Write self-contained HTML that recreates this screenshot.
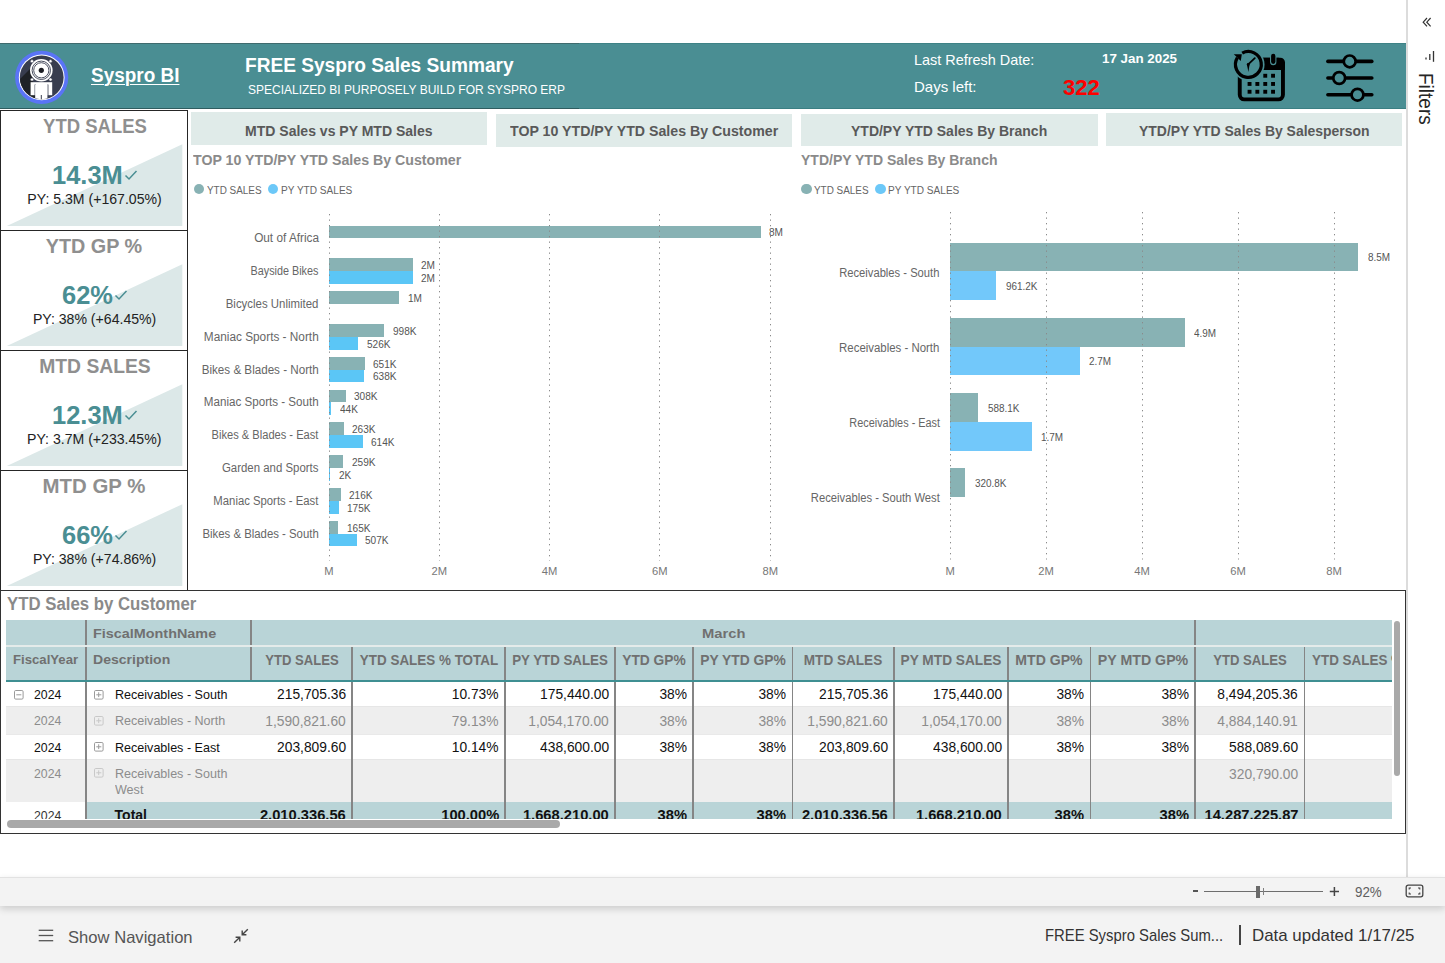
<!DOCTYPE html>
<html><head><meta charset="utf-8"><style>
*{box-sizing:border-box;margin:0;padding:0}
html,body{width:1445px;height:963px;overflow:hidden;background:#fff;font-family:"Liberation Sans",sans-serif;position:relative}
.a{position:absolute;white-space:nowrap}
.hdr{left:0;top:43px;width:1406px;height:66px;background:#4a8e93}
.wt{color:#fff}
</style></head><body>
<!-- header -->
<div class="a hdr"></div>
<svg class="a" style="left:10px;top:45px" width="64" height="64" viewBox="0 0 64 64">
  <defs><clipPath id="lc"><circle cx="31.7" cy="32.4" r="21.8"/></clipPath></defs>
  <circle cx="31.7" cy="32.4" r="26.6" fill="#5a74f6"/>
  <circle cx="31.7" cy="32.4" r="22.9" fill="#fff"/>
  <circle cx="31.7" cy="32.4" r="21.9" fill="#383d4f"/>
  <g clip-path="url(#lc)"><path d="M4 40 L21 23 L26 58 L4 58 Z" fill="#1f2226"/></g>
  <circle cx="31.3" cy="25.3" r="11.3" fill="#fff"/>
  <circle cx="31.3" cy="25.3" r="9.2" fill="none" stroke="#383d4f" stroke-width="0.9"/>
  <circle cx="31.3" cy="25.3" r="7.6" fill="none" stroke="#383d4f" stroke-width="0.9"/>
  <circle cx="31.3" cy="25.3" r="2.6" fill="#1d1f24"/>
  <g fill="#fff" stroke="#383d4f" stroke-width="0.5"><circle cx="22" cy="16.2" r="1.6"/><circle cx="40.5" cy="16.2" r="1.6"/>
  <circle cx="22" cy="34.5" r="1.6"/><circle cx="40.5" cy="34.5" r="1.6"/></g>
  <g clip-path="url(#lc)">
  <rect x="20.6" y="37.2" width="21.6" height="13" fill="#fff"/>
  <rect x="24.6" y="39.5" width="1" height="12" fill="#383d4f"/>
  <rect x="37.4" y="39.5" width="1" height="12" fill="#383d4f"/>
  <rect x="25.2" y="40" width="12.2" height="16" fill="#fff"/>
  <rect x="30.8" y="50" width="1" height="8" fill="#383d4f"/>
  </g>
</svg>
<div class="a wt" style="left:91px;top:64px;font-size:19.5px;font-weight:700;text-decoration:underline;text-underline-offset:1.5px;text-decoration-thickness:1.2px;transform:scaleX(0.972);transform-origin:0 0">Syspro BI</div>
<div class="a wt" style="left:245px;top:54px;font-size:20px;font-weight:700;transform:scaleX(0.955);transform-origin:0 0">FREE Syspro Sales Summary</div>
<div class="a wt" style="left:248px;top:82px;font-size:13.5px;transform:scaleX(0.889);transform-origin:0 0">SPECIALIZED BI PURPOSELY BUILD FOR SYSPRO ERP</div>
<div class="a wt" style="left:914px;top:51.5px;font-size:14.8px;transform:scaleX(0.975);transform-origin:0 0">Last Refresh Date:</div>
<div class="a wt" style="left:914px;top:78px;font-size:15px">Days left:</div>
<div class="a wt" style="left:1102px;top:50.8px;font-size:13.5px;font-weight:700;transform:scaleX(0.99);transform-origin:0 0">17 Jan 2025</div>
<div class="a" style="left:1063px;top:75.2px;font-size:22px;font-weight:700;color:#fe0000;transform:scaleX(1.0);transform-origin:0 0">322</div>
<svg class="a" style="left:1225px;top:45px" width="70" height="63" viewBox="0 0 70 63">
  <rect x="14.75" y="14.75" width="43.2" height="39.6" rx="4.5" fill="none" stroke="#000" stroke-width="3.9"/>
  <rect x="12.8" y="12.8" width="47.1" height="12.1" rx="4.5" fill="#000"/>
  <rect x="12.8" y="18" width="47.1" height="6.9" fill="#000"/>
  <rect x="45" y="7.8" width="6.4" height="12.4" rx="3.2" fill="#4a8e93"/>
  <rect x="46.1" y="8.8" width="4.3" height="10.2" rx="2.15" fill="#000"/>
  <g fill="#000">
   <rect x="38.3" y="28.8" width="3.9" height="3.9"/><rect x="46.1" y="28.8" width="3.9" height="3.9"/>
   <rect x="22.6" y="37" width="3.9" height="3.9"/><rect x="30.4" y="37" width="3.9" height="3.9"/><rect x="38.3" y="37" width="3.9" height="3.9"/><rect x="46.1" y="37" width="3.9" height="3.9"/>
   <rect x="22.6" y="44.8" width="3.9" height="3.9"/><rect x="30.4" y="44.8" width="3.9" height="3.9"/><rect x="38.3" y="44.8" width="3.9" height="3.9"/><rect x="46.1" y="44.8" width="3.9" height="3.9"/>
  </g>
  <circle cx="23.35" cy="19.45" r="16.2" fill="#4a8e93"/>
  <path d="M17.2 8.1 A12.9 12.9 0 1 1 12.4 12.65" fill="none" stroke="#000" stroke-width="3.3"/>
  <path d="M8.8 9.2 L16.8 9.2 L15.8 16 Z" fill="#000"/>
  <path d="M23.2 19.3 L29.8 13.1" stroke="#000" stroke-width="1.8" stroke-linecap="round"/>
  <path d="M21.9 19.6 L23.4 27 L24.6 19.2 Z" fill="#000"/>
  <circle cx="23.2" cy="19.5" r="1.4" fill="#000"/>
</svg>
<svg class="a" style="left:1315px;top:45px" width="70" height="63" viewBox="0 0 70 63">
  <g stroke="#000" stroke-width="3.6" stroke-linecap="round" fill="none">
    <line x1="12.9" y1="16.4" x2="56.8" y2="16.4"/>
    <line x1="12.9" y1="33" x2="56.8" y2="33"/>
    <line x1="12.9" y1="49.7" x2="56.8" y2="49.7"/>
  </g>
  <g stroke="#000" stroke-width="2.7" fill="#4a8e93">
    <circle cx="34.7" cy="16.4" r="5.9"/>
    <circle cx="24.2" cy="33" r="5.9"/>
    <circle cx="42.5" cy="49.7" r="5.9"/>
  </g>
</svg>


<div class="a" style="left:0;top:42.9px;width:579px;height:1.6px;background:#3f6b6e"></div>
<div class="a" style="left:579px;top:42.9px;width:827px;height:1.6px;background:#3e8286"></div>
<div class="a" style="left:0;top:107.6px;width:579px;height:1.5px;background:#2f5d60"></div>
<div class="a" style="left:579px;top:107.6px;width:827px;height:1.5px;background:#3b7f83"></div>
<div class="a" style="left:1406px;top:0;width:1.5px;height:877px;background:#dcdcdc"></div>
<div class="a" style="left:0;top:109.5px;width:187.5px;height:121.5px;border:1.5px solid #262626;background:#fff"></div>
<svg class="a" style="left:0;top:110px" width="187" height="121"><polygon points="6.8,115.9 182.3,34.2 182.3,115.9" fill="#dce8e8"/></svg>
<div class="a" style="top:115.83px;font-size:20.4px;line-height:20.4px;font-weight:700;color:#8f8f8f;left:94.50px;transform:translateX(-50%) scaleX(0.9084);transform-origin:50% 0;">YTD SALES</div>
<div class="a" style="top:162.35px;font-size:26.4px;line-height:26.4px;font-weight:700;color:#4a8e93;left:52.40px;transform:scaleX(0.965);transform-origin:0 0;">14.3M</div>
<svg class="a" style="left:124.4px;top:169.3px" width="14" height="12"><path d="M1.5 6.5 L5 10 L12.5 2" fill="none" stroke="#4a8e93" stroke-width="1.5"/></svg>
<div class="a" style="top:191.66px;font-size:14.1px;line-height:14.1px;font-weight:400;color:#222;left:94.55px;transform:translateX(-50%) scaleX(1.0);transform-origin:50% 0;">PY: 5.3M (+167.05%)</div>
<div class="a" style="left:0;top:229.5px;width:187.5px;height:121.5px;border:1.5px solid #262626;background:#fff"></div>
<svg class="a" style="left:0;top:230px" width="187" height="121"><polygon points="6.8,115.9 182.3,34.2 182.3,115.9" fill="#dce8e8"/></svg>
<div class="a" style="top:235.83px;font-size:20.4px;line-height:20.4px;font-weight:700;color:#8f8f8f;left:94.25px;transform:translateX(-50%) scaleX(0.971);transform-origin:50% 0;">YTD GP %</div>
<div class="a" style="top:282.35px;font-size:26.4px;line-height:26.4px;font-weight:700;color:#4a8e93;left:61.90px;transform:scaleX(0.965);transform-origin:0 0;">62%</div>
<svg class="a" style="left:114.0px;top:289.3px" width="14" height="12"><path d="M1.5 6.5 L5 10 L12.5 2" fill="none" stroke="#4a8e93" stroke-width="1.5"/></svg>
<div class="a" style="top:311.66px;font-size:14.1px;line-height:14.1px;font-weight:400;color:#222;left:94.60px;transform:translateX(-50%) scaleX(1.0);transform-origin:50% 0;">PY: 38% (+64.45%)</div>
<div class="a" style="left:0;top:349.5px;width:187.5px;height:121.5px;border:1.5px solid #262626;background:#fff"></div>
<svg class="a" style="left:0;top:350px" width="187" height="121"><polygon points="6.8,115.9 182.3,34.2 182.3,115.9" fill="#dce8e8"/></svg>
<div class="a" style="top:355.83px;font-size:20.4px;line-height:20.4px;font-weight:700;color:#8f8f8f;left:94.65px;transform:translateX(-50%) scaleX(0.946);transform-origin:50% 0;">MTD SALES</div>
<div class="a" style="top:402.35px;font-size:26.4px;line-height:26.4px;font-weight:700;color:#4a8e93;left:51.50px;transform:scaleX(0.965);transform-origin:0 0;">12.3M</div>
<svg class="a" style="left:123.7px;top:409.3px" width="14" height="12"><path d="M1.5 6.5 L5 10 L12.5 2" fill="none" stroke="#4a8e93" stroke-width="1.5"/></svg>
<div class="a" style="top:431.66px;font-size:14.1px;line-height:14.1px;font-weight:400;color:#222;left:94.25px;transform:translateX(-50%) scaleX(1.0);transform-origin:50% 0;">PY: 3.7M (+233.45%)</div>
<div class="a" style="left:0;top:469.5px;width:187.5px;height:121.5px;border:1.5px solid #262626;background:#fff"></div>
<svg class="a" style="left:0;top:470px" width="187" height="121"><polygon points="6.8,115.9 182.3,34.2 182.3,115.9" fill="#dce8e8"/></svg>
<div class="a" style="top:475.83px;font-size:20.4px;line-height:20.4px;font-weight:700;color:#8f8f8f;left:94.30px;transform:translateX(-50%) scaleX(1.0003);transform-origin:50% 0;">MTD GP %</div>
<div class="a" style="top:522.35px;font-size:26.4px;line-height:26.4px;font-weight:700;color:#4a8e93;left:61.90px;transform:scaleX(0.965);transform-origin:0 0;">66%</div>
<svg class="a" style="left:114.0px;top:529.3px" width="14" height="12"><path d="M1.5 6.5 L5 10 L12.5 2" fill="none" stroke="#4a8e93" stroke-width="1.5"/></svg>
<div class="a" style="top:551.66px;font-size:14.1px;line-height:14.1px;font-weight:400;color:#222;left:94.60px;transform:translateX(-50%) scaleX(1.0);transform-origin:50% 0;">PY: 38% (+74.86%)</div>
<div class="a" style="left:191px;top:112.3px;width:296px;height:32.60000000000001px;background:#e0ebe9"></div>
<div class="a" style="top:122.80px;font-size:15px;line-height:15px;font-weight:700;color:#595959;left:245.40px;transform:scaleX(0.9351);transform-origin:0 0;">MTD Sales vs PY MTD Sales</div>
<div class="a" style="left:496px;top:113.8px;width:296px;height:32.8px;background:#e0ebe9"></div>
<div class="a" style="top:123.30px;font-size:15px;line-height:15px;font-weight:700;color:#595959;left:510.00px;transform:scaleX(0.9453);transform-origin:0 0;">TOP 10 YTD/PY YTD Sales By Customer</div>
<div class="a" style="left:801px;top:113.9px;width:296.79999999999995px;height:32.5px;background:#e0ebe9"></div>
<div class="a" style="top:123.30px;font-size:15px;line-height:15px;font-weight:700;color:#595959;left:851.30px;transform:scaleX(0.9327);transform-origin:0 0;">YTD/PY YTD Sales By Branch</div>
<div class="a" style="left:1106px;top:112.5px;width:296px;height:33.0px;background:#e0ebe9"></div>
<div class="a" style="top:122.80px;font-size:15px;line-height:15px;font-weight:700;color:#595959;left:1139.00px;transform:scaleX(0.9303);transform-origin:0 0;">YTD/PY YTD Sales By Salesperson</div>
<div class="a" style="top:153.15px;font-size:14px;line-height:14px;font-weight:700;color:#8a8a8a;left:193.20px;transform:scaleX(1.0128);transform-origin:0 0;">TOP 10 YTD/PY YTD Sales By Customer</div>
<div class="a" style="top:153.35px;font-size:14px;line-height:14px;font-weight:700;color:#8a8a8a;left:801.00px;transform:scaleX(1.0009);transform-origin:0 0;">YTD/PY YTD Sales By Branch</div>
<div class="a" style="left:193.5px;top:183.8px;width:10.6px;height:10.6px;border-radius:50%;background:#88b2b4"></div>
<div class="a" style="top:183.70px;font-size:11.7px;line-height:11.7px;font-weight:400;color:#666;left:206.90px;transform:scaleX(0.8482);transform-origin:0 0;">YTD SALES</div>
<div class="a" style="left:267.8px;top:183.8px;width:10.6px;height:10.6px;border-radius:50%;background:#6cc8f8"></div>
<div class="a" style="top:183.70px;font-size:11.7px;line-height:11.7px;font-weight:400;color:#666;left:280.50px;transform:scaleX(0.8622);transform-origin:0 0;">PY YTD SALES</div>
<div class="a" style="left:801px;top:183.8px;width:10.6px;height:10.6px;border-radius:50%;background:#88b2b4"></div>
<div class="a" style="top:183.70px;font-size:11.7px;line-height:11.7px;font-weight:400;color:#666;left:814.40px;transform:scaleX(0.8482);transform-origin:0 0;">YTD SALES</div>
<div class="a" style="left:875.3px;top:183.8px;width:10.6px;height:10.6px;border-radius:50%;background:#6cc8f8"></div>
<div class="a" style="top:183.70px;font-size:11.7px;line-height:11.7px;font-weight:400;color:#666;left:888.00px;transform:scaleX(0.8622);transform-origin:0 0;">PY YTD SALES</div>
<div class="a" style="top:232.44px;font-size:12px;line-height:12px;font-weight:400;color:#666;right:1126.40px;transform:scaleX(0.9829);transform-origin:100% 0;">Out of Africa</div>
<div class="a" style="left:329.0px;top:225.60px;width:431.82px;height:12.8px;background:#88b2b4"></div>
<div class="a" style="top:228.40px;font-size:10.4px;line-height:10.4px;font-weight:400;color:#555;left:769.32px;transform:scaleX(0.97);transform-origin:0 0;">8M</div>
<div class="a" style="top:265.24px;font-size:12px;line-height:12px;font-weight:400;color:#666;right:1126.40px;transform:scaleX(0.8996);transform-origin:100% 0;">Bayside Bikes</div>
<div class="a" style="left:329.0px;top:258.40px;width:83.83px;height:12.8px;background:#88b2b4"></div>
<div class="a" style="top:261.20px;font-size:10.4px;line-height:10.4px;font-weight:400;color:#555;left:421.33px;transform:scaleX(0.97);transform-origin:0 0;">2M</div>
<div class="a" style="left:329.0px;top:271.20px;width:83.55px;height:12.8px;background:#5bc6f6"></div>
<div class="a" style="top:274.00px;font-size:10.4px;line-height:10.4px;font-weight:400;color:#555;left:421.05px;transform:scaleX(0.97);transform-origin:0 0;">2M</div>
<div class="a" style="top:298.04px;font-size:12px;line-height:12px;font-weight:400;color:#666;right:1126.40px;transform:scaleX(0.9511);transform-origin:100% 0;">Bicycles Unlimited</div>
<div class="a" style="left:329.0px;top:291.20px;width:70.37px;height:12.8px;background:#88b2b4"></div>
<div class="a" style="top:294.00px;font-size:10.4px;line-height:10.4px;font-weight:400;color:#555;left:407.87px;transform:scaleX(0.97);transform-origin:0 0;">1M</div>
<div class="a" style="top:330.84px;font-size:12px;line-height:12px;font-weight:400;color:#666;right:1126.40px;transform:scaleX(0.9846);transform-origin:100% 0;">Maniac Sports - North</div>
<div class="a" style="left:329.0px;top:324.00px;width:55.04px;height:12.8px;background:#88b2b4"></div>
<div class="a" style="top:326.80px;font-size:10.4px;line-height:10.4px;font-weight:400;color:#555;left:392.54px;transform:scaleX(0.97);transform-origin:0 0;">998K</div>
<div class="a" style="left:329.0px;top:336.80px;width:29.01px;height:12.8px;background:#5bc6f6"></div>
<div class="a" style="top:339.60px;font-size:10.4px;line-height:10.4px;font-weight:400;color:#555;left:366.51px;transform:scaleX(0.97);transform-origin:0 0;">526K</div>
<div class="a" style="top:363.64px;font-size:12px;line-height:12px;font-weight:400;color:#666;right:1126.40px;transform:scaleX(0.9693);transform-origin:100% 0;">Bikes &amp; Blades - North</div>
<div class="a" style="left:329.0px;top:356.80px;width:35.90px;height:12.8px;background:#88b2b4"></div>
<div class="a" style="top:359.60px;font-size:10.4px;line-height:10.4px;font-weight:400;color:#555;left:373.40px;transform:scaleX(0.97);transform-origin:0 0;">651K</div>
<div class="a" style="left:329.0px;top:369.60px;width:35.19px;height:12.8px;background:#5bc6f6"></div>
<div class="a" style="top:372.40px;font-size:10.4px;line-height:10.4px;font-weight:400;color:#555;left:372.69px;transform:scaleX(0.97);transform-origin:0 0;">638K</div>
<div class="a" style="top:396.44px;font-size:12px;line-height:12px;font-weight:400;color:#666;right:1126.40px;transform:scaleX(0.9679);transform-origin:100% 0;">Maniac Sports - South</div>
<div class="a" style="left:329.0px;top:389.60px;width:16.99px;height:12.8px;background:#88b2b4"></div>
<div class="a" style="top:392.40px;font-size:10.4px;line-height:10.4px;font-weight:400;color:#555;left:354.49px;transform:scaleX(0.97);transform-origin:0 0;">308K</div>
<div class="a" style="left:329.0px;top:402.40px;width:2.43px;height:12.8px;background:#5bc6f6"></div>
<div class="a" style="top:405.20px;font-size:10.4px;line-height:10.4px;font-weight:400;color:#555;left:339.93px;transform:scaleX(0.97);transform-origin:0 0;">44K</div>
<div class="a" style="top:429.24px;font-size:12px;line-height:12px;font-weight:400;color:#666;right:1126.40px;transform:scaleX(0.9256);transform-origin:100% 0;">Bikes &amp; Blades - East</div>
<div class="a" style="left:329.0px;top:422.40px;width:14.50px;height:12.8px;background:#88b2b4"></div>
<div class="a" style="top:425.20px;font-size:10.4px;line-height:10.4px;font-weight:400;color:#555;left:352.00px;transform:scaleX(0.97);transform-origin:0 0;">263K</div>
<div class="a" style="left:329.0px;top:435.20px;width:33.86px;height:12.8px;background:#5bc6f6"></div>
<div class="a" style="top:438.00px;font-size:10.4px;line-height:10.4px;font-weight:400;color:#555;left:371.36px;transform:scaleX(0.97);transform-origin:0 0;">614K</div>
<div class="a" style="top:462.04px;font-size:12px;line-height:12px;font-weight:400;color:#666;right:1126.40px;transform:scaleX(0.9508);transform-origin:100% 0;">Garden and Sports</div>
<div class="a" style="left:329.0px;top:455.20px;width:14.28px;height:12.8px;background:#88b2b4"></div>
<div class="a" style="top:458.00px;font-size:10.4px;line-height:10.4px;font-weight:400;color:#555;left:351.78px;transform:scaleX(0.97);transform-origin:0 0;">259K</div>
<div class="a" style="left:329.0px;top:468.00px;width:1.00px;height:12.8px;background:#5bc6f6"></div>
<div class="a" style="top:470.80px;font-size:10.4px;line-height:10.4px;font-weight:400;color:#555;left:338.50px;transform:scaleX(0.97);transform-origin:0 0;">2K</div>
<div class="a" style="top:494.84px;font-size:12px;line-height:12px;font-weight:400;color:#666;right:1126.40px;transform:scaleX(0.9428);transform-origin:100% 0;">Maniac Sports - East</div>
<div class="a" style="left:329.0px;top:488.00px;width:11.91px;height:12.8px;background:#88b2b4"></div>
<div class="a" style="top:490.80px;font-size:10.4px;line-height:10.4px;font-weight:400;color:#555;left:349.41px;transform:scaleX(0.97);transform-origin:0 0;">216K</div>
<div class="a" style="left:329.0px;top:500.80px;width:9.65px;height:12.8px;background:#5bc6f6"></div>
<div class="a" style="top:503.60px;font-size:10.4px;line-height:10.4px;font-weight:400;color:#555;left:347.15px;transform:scaleX(0.97);transform-origin:0 0;">175K</div>
<div class="a" style="top:527.64px;font-size:12px;line-height:12px;font-weight:400;color:#666;right:1126.40px;transform:scaleX(0.9476);transform-origin:100% 0;">Bikes &amp; Blades - South</div>
<div class="a" style="left:329.0px;top:520.80px;width:9.10px;height:12.8px;background:#88b2b4"></div>
<div class="a" style="top:523.60px;font-size:10.4px;line-height:10.4px;font-weight:400;color:#555;left:346.60px;transform:scaleX(0.97);transform-origin:0 0;">165K</div>
<div class="a" style="left:329.0px;top:533.60px;width:27.96px;height:12.8px;background:#5bc6f6"></div>
<div class="a" style="top:536.40px;font-size:10.4px;line-height:10.4px;font-weight:400;color:#555;left:365.46px;transform:scaleX(0.97);transform-origin:0 0;">507K</div>
<svg class="a" style="left:327.5px;top:213.5px" width="3" height="347.0"><line x1="1.5" y1="0" x2="1.5" y2="347.0" stroke="#8a8a8a" stroke-width="1" stroke-dasharray="1.3 4.2"/></svg>
<div class="a" style="left:329.00px;top:565.82px;font-size:11.2px;line-height:11.2px;color:#777;transform:translateX(-50%)">M</div>
<svg class="a" style="left:437.8px;top:213.5px" width="3" height="347.0"><line x1="1.5" y1="0" x2="1.5" y2="347.0" stroke="#8a8a8a" stroke-width="1" stroke-dasharray="1.3 4.2"/></svg>
<div class="a" style="left:439.30px;top:565.82px;font-size:11.2px;line-height:11.2px;color:#777;transform:translateX(-50%)">2M</div>
<svg class="a" style="left:548.1px;top:213.5px" width="3" height="347.0"><line x1="1.5" y1="0" x2="1.5" y2="347.0" stroke="#8a8a8a" stroke-width="1" stroke-dasharray="1.3 4.2"/></svg>
<div class="a" style="left:549.60px;top:565.82px;font-size:11.2px;line-height:11.2px;color:#777;transform:translateX(-50%)">4M</div>
<svg class="a" style="left:658.4px;top:213.5px" width="3" height="347.0"><line x1="1.5" y1="0" x2="1.5" y2="347.0" stroke="#8a8a8a" stroke-width="1" stroke-dasharray="1.3 4.2"/></svg>
<div class="a" style="left:659.90px;top:565.82px;font-size:11.2px;line-height:11.2px;color:#777;transform:translateX(-50%)">6M</div>
<svg class="a" style="left:768.7px;top:213.5px" width="3" height="347.0"><line x1="1.5" y1="0" x2="1.5" y2="347.0" stroke="#8a8a8a" stroke-width="1" stroke-dasharray="1.3 4.2"/></svg>
<div class="a" style="left:770.20px;top:565.82px;font-size:11.2px;line-height:11.2px;color:#777;transform:translateX(-50%)">8M</div>
<div class="a" style="top:266.54px;font-size:12px;line-height:12px;font-weight:400;color:#666;right:505.40px;transform:scaleX(0.9331);transform-origin:100% 0;">Receivables - South</div>
<div class="a" style="left:950.1px;top:242.60px;width:407.71px;height:28.8px;background:#88b2b4"></div>
<div class="a" style="top:252.44px;font-size:10.7px;line-height:10.7px;font-weight:400;color:#555;left:1367.51px;transform:scaleX(0.93);transform-origin:0 0;">8.5M</div>
<div class="a" style="left:950.1px;top:271.40px;width:46.14px;height:28.8px;background:#72c8fa"></div>
<div class="a" style="top:281.24px;font-size:10.7px;line-height:10.7px;font-weight:400;color:#555;left:1005.94px;transform:scaleX(0.93);transform-origin:0 0;">961.2K</div>
<div class="a" style="top:341.74px;font-size:12px;line-height:12px;font-weight:400;color:#666;right:505.40px;transform:scaleX(0.9519);transform-origin:100% 0;">Receivables - North</div>
<div class="a" style="left:950.1px;top:317.80px;width:234.43px;height:28.8px;background:#88b2b4"></div>
<div class="a" style="top:327.64px;font-size:10.7px;line-height:10.7px;font-weight:400;color:#555;left:1194.23px;transform:scaleX(0.93);transform-origin:0 0;">4.9M</div>
<div class="a" style="left:950.1px;top:346.60px;width:129.60px;height:28.8px;background:#72c8fa"></div>
<div class="a" style="top:356.44px;font-size:10.7px;line-height:10.7px;font-weight:400;color:#555;left:1089.40px;transform:scaleX(0.93);transform-origin:0 0;">2.7M</div>
<div class="a" style="top:416.94px;font-size:12px;line-height:12px;font-weight:400;color:#666;right:505.40px;transform:scaleX(0.9066);transform-origin:100% 0;">Receivables - East</div>
<div class="a" style="left:950.1px;top:393.00px;width:28.22px;height:28.8px;background:#88b2b4"></div>
<div class="a" style="top:402.84px;font-size:10.7px;line-height:10.7px;font-weight:400;color:#555;left:988.02px;transform:scaleX(0.93);transform-origin:0 0;">588.1K</div>
<div class="a" style="left:950.1px;top:421.80px;width:81.60px;height:28.8px;background:#72c8fa"></div>
<div class="a" style="top:431.64px;font-size:10.7px;line-height:10.7px;font-weight:400;color:#555;left:1041.40px;transform:scaleX(0.93);transform-origin:0 0;">1.7M</div>
<div class="a" style="top:492.14px;font-size:12px;line-height:12px;font-weight:400;color:#666;right:505.40px;transform:scaleX(0.9359);transform-origin:100% 0;">Receivables - South West</div>
<div class="a" style="left:950.1px;top:468.20px;width:15.40px;height:28.8px;background:#88b2b4"></div>
<div class="a" style="top:478.04px;font-size:10.7px;line-height:10.7px;font-weight:400;color:#555;left:975.20px;transform:scaleX(0.93);transform-origin:0 0;">320.8K</div>
<svg class="a" style="left:948.6px;top:212px" width="3" height="347.5"><line x1="1.5" y1="0" x2="1.5" y2="347.5" stroke="#8a8a8a" stroke-width="1" stroke-dasharray="1.3 4.2"/></svg>
<div class="a" style="left:950.10px;top:565.62px;font-size:11.2px;line-height:11.2px;color:#777;transform:translateX(-50%)">M</div>
<svg class="a" style="left:1044.6px;top:212px" width="3" height="347.5"><line x1="1.5" y1="0" x2="1.5" y2="347.5" stroke="#8a8a8a" stroke-width="1" stroke-dasharray="1.3 4.2"/></svg>
<div class="a" style="left:1046.10px;top:565.62px;font-size:11.2px;line-height:11.2px;color:#777;transform:translateX(-50%)">2M</div>
<svg class="a" style="left:1140.6px;top:212px" width="3" height="347.5"><line x1="1.5" y1="0" x2="1.5" y2="347.5" stroke="#8a8a8a" stroke-width="1" stroke-dasharray="1.3 4.2"/></svg>
<div class="a" style="left:1142.10px;top:565.62px;font-size:11.2px;line-height:11.2px;color:#777;transform:translateX(-50%)">4M</div>
<svg class="a" style="left:1236.6px;top:212px" width="3" height="347.5"><line x1="1.5" y1="0" x2="1.5" y2="347.5" stroke="#8a8a8a" stroke-width="1" stroke-dasharray="1.3 4.2"/></svg>
<div class="a" style="left:1238.10px;top:565.62px;font-size:11.2px;line-height:11.2px;color:#777;transform:translateX(-50%)">6M</div>
<svg class="a" style="left:1332.6px;top:212px" width="3" height="347.5"><line x1="1.5" y1="0" x2="1.5" y2="347.5" stroke="#8a8a8a" stroke-width="1" stroke-dasharray="1.3 4.2"/></svg>
<div class="a" style="left:1334.10px;top:565.62px;font-size:11.2px;line-height:11.2px;color:#777;transform:translateX(-50%)">8M</div>
<div class="a" style="left:0;top:590px;width:1406px;height:244px;border:1.5px solid #333"></div>
<div class="a" style="top:596.19px;font-size:17.5px;line-height:17.5px;font-weight:700;color:#8a8a8a;left:6.70px;transform:scaleX(0.9589);transform-origin:0 0;">YTD Sales by Customer</div>
<div class="a" style="left:6.30px;top:620.40px;width:1385.50px;height:24.30px;background:#b9d4d7;"></div>
<div class="a" style="left:6.30px;top:644.70px;width:1385.50px;height:2.10px;background:#e4ebea;"></div>
<div class="a" style="left:6.30px;top:646.80px;width:1385.50px;height:33.00px;background:#b9d4d7;"></div>
<div class="a" style="left:6.30px;top:679.80px;width:1385.50px;height:1.80px;background:#3f8f92;"></div>
<div class="a" style="left:6.30px;top:681.80px;width:1385.50px;height:24.20px;background:#fff;"></div>
<div class="a" style="left:6.30px;top:706.00px;width:1385.50px;height:1.30px;background:#e6e6e6;"></div>
<div class="a" style="left:6.30px;top:707.30px;width:1385.50px;height:26.30px;background:#eeeeee;"></div>
<div class="a" style="left:6.30px;top:733.60px;width:1385.50px;height:1.00px;background:#e9e9e9;"></div>
<div class="a" style="left:6.30px;top:734.60px;width:1385.50px;height:24.40px;background:#fff;"></div>
<div class="a" style="left:6.30px;top:759.00px;width:1385.50px;height:1.20px;background:#e6e6e6;"></div>
<div class="a" style="left:6.30px;top:760.20px;width:1385.50px;height:42.20px;background:#eeeeee;"></div>
<div class="a" style="left:86.00px;top:802.40px;width:1305.80px;height:16.60px;background:#b9d4d7;"></div>
<div class="a" style="left:6.30px;top:802.40px;width:79.70px;height:16.60px;background:#fff;"></div>
<div class="a" style="left:85.25px;top:620.40px;width:1.50px;height:24.30px;background:#858585;"></div>
<div class="a" style="left:250.25px;top:620.40px;width:1.50px;height:24.30px;background:#858585;"></div>
<div class="a" style="left:1194.25px;top:620.40px;width:1.50px;height:24.30px;background:#858585;"></div>
<div class="a" style="left:85.25px;top:646.80px;width:1.50px;height:33.00px;background:#858585;"></div>
<div class="a" style="left:250.25px;top:646.80px;width:1.50px;height:33.00px;background:#858585;"></div>
<div class="a" style="left:351.25px;top:646.80px;width:1.50px;height:33.00px;background:#858585;"></div>
<div class="a" style="left:504.25px;top:646.80px;width:1.50px;height:33.00px;background:#858585;"></div>
<div class="a" style="left:614.25px;top:646.80px;width:1.50px;height:33.00px;background:#858585;"></div>
<div class="a" style="left:692.25px;top:646.80px;width:1.50px;height:33.00px;background:#858585;"></div>
<div class="a" style="left:791.75px;top:646.80px;width:1.50px;height:33.00px;background:#858585;"></div>
<div class="a" style="left:893.25px;top:646.80px;width:1.50px;height:33.00px;background:#858585;"></div>
<div class="a" style="left:1007.25px;top:646.80px;width:1.50px;height:33.00px;background:#858585;"></div>
<div class="a" style="left:1089.75px;top:646.80px;width:1.50px;height:33.00px;background:#858585;"></div>
<div class="a" style="left:1194.25px;top:646.80px;width:1.50px;height:33.00px;background:#858585;"></div>
<div class="a" style="left:1303.55px;top:646.80px;width:1.50px;height:33.00px;background:#858585;"></div>
<div class="a" style="left:85.25px;top:681.80px;width:1.50px;height:137.20px;background:#858585;"></div>
<div class="a" style="left:351.25px;top:681.80px;width:1.50px;height:137.20px;background:#858585;"></div>
<div class="a" style="left:504.25px;top:681.80px;width:1.50px;height:137.20px;background:#858585;"></div>
<div class="a" style="left:614.25px;top:681.80px;width:1.50px;height:137.20px;background:#858585;"></div>
<div class="a" style="left:692.25px;top:681.80px;width:1.50px;height:137.20px;background:#858585;"></div>
<div class="a" style="left:791.75px;top:681.80px;width:1.50px;height:137.20px;background:#858585;"></div>
<div class="a" style="left:893.25px;top:681.80px;width:1.50px;height:137.20px;background:#858585;"></div>
<div class="a" style="left:1007.25px;top:681.80px;width:1.50px;height:137.20px;background:#858585;"></div>
<div class="a" style="left:1089.75px;top:681.80px;width:1.50px;height:137.20px;background:#858585;"></div>
<div class="a" style="left:1194.25px;top:681.80px;width:1.50px;height:137.20px;background:#858585;"></div>
<div class="a" style="left:1303.55px;top:681.80px;width:1.50px;height:137.20px;background:#858585;"></div>
<div class="a" style="top:626.89px;font-size:13.6px;line-height:13.6px;font-weight:700;color:#707070;left:92.70px;transform:scaleX(1.0587);transform-origin:0 0;">FiscalMonthName</div>
<div class="a" style="top:626.89px;font-size:13.6px;line-height:13.6px;font-weight:700;color:#707070;left:701.60px;transform:scaleX(1.0835);transform-origin:0 0;">March</div>
<div class="a" style="top:653.09px;font-size:13.6px;line-height:13.6px;font-weight:700;color:#707070;left:12.60px;transform:scaleX(0.9674);transform-origin:0 0;">FiscalYear</div>
<div class="a" style="top:653.09px;font-size:13.6px;line-height:13.6px;font-weight:700;color:#707070;left:92.70px;transform:scaleX(1.0333);transform-origin:0 0;">Description</div>
<div class="a" style="top:652.75px;font-size:14px;line-height:14px;font-weight:700;color:#707070;left:301.50px;transform:translateX(-50%) scaleX(0.9342);transform-origin:50% 0;">YTD SALES</div>
<div class="a" style="top:652.75px;font-size:14px;line-height:14px;font-weight:700;color:#707070;left:428.50px;transform:translateX(-50%) scaleX(0.9594);transform-origin:50% 0;">YTD SALES % TOTAL</div>
<div class="a" style="top:652.75px;font-size:14px;line-height:14px;font-weight:700;color:#707070;left:560.00px;transform:translateX(-50%) scaleX(0.9511);transform-origin:50% 0;">PY YTD SALES</div>
<div class="a" style="top:652.75px;font-size:14px;line-height:14px;font-weight:700;color:#707070;left:654.00px;transform:translateX(-50%) scaleX(0.985);transform-origin:50% 0;">YTD GP%</div>
<div class="a" style="top:652.75px;font-size:14px;line-height:14px;font-weight:700;color:#707070;left:742.75px;transform:translateX(-50%) scaleX(0.987);transform-origin:50% 0;">PY YTD GP%</div>
<div class="a" style="top:652.75px;font-size:14px;line-height:14px;font-weight:700;color:#707070;left:843.25px;transform:translateX(-50%) scaleX(0.9692);transform-origin:50% 0;">MTD SALES</div>
<div class="a" style="top:652.75px;font-size:14px;line-height:14px;font-weight:700;color:#707070;left:951.00px;transform:translateX(-50%) scaleX(0.9777);transform-origin:50% 0;">PY MTD SALES</div>
<div class="a" style="top:652.75px;font-size:14px;line-height:14px;font-weight:700;color:#707070;left:1049.25px;transform:translateX(-50%) scaleX(1.0061);transform-origin:50% 0;">MTD GP%</div>
<div class="a" style="top:652.75px;font-size:14px;line-height:14px;font-weight:700;color:#707070;left:1142.75px;transform:translateX(-50%) scaleX(1.0146);transform-origin:50% 0;">PY MTD GP%</div>
<div class="a" style="top:652.75px;font-size:14px;line-height:14px;font-weight:700;color:#707070;left:1249.65px;transform:translateX(-50%) scaleX(0.9368);transform-origin:50% 0;">YTD SALES</div>
<div class="a" style="left:1304.3px;top:646.8px;width:87.5px;height:33px;overflow:hidden">
<div class="a" style="left:7.3px;top:5.95px;font-size:14px;line-height:14px;font-weight:700;color:#707070;transform:scaleX(0.9594);transform-origin:0 0">YTD SALES % TOTAL</div></div>
<svg class="a" style="left:13.8px;top:689.6px" width="10" height="10"><rect x="0.5" y="0.5" width="8.6" height="8.6" rx="1.2" fill="none" stroke="#9a9a9a" stroke-width="1"/><line x1="2.3" y1="4.8" x2="7.3" y2="4.8" stroke="#9a9a9a" stroke-width="1"/></svg>
<svg class="a" style="left:93.8px;top:689.8px" width="10" height="10"><rect x="0.5" y="0.5" width="8.6" height="8.6" rx="1.2" fill="none" stroke="#9a9a9a" stroke-width="1"/><line x1="2.3" y1="4.8" x2="7.3" y2="4.8" stroke="#9a9a9a" stroke-width="1"/><line x1="4.7" y1="2.3" x2="4.7" y2="7.1" stroke="#9a9a9a" stroke-width="1"/></svg>
<svg class="a" style="left:93.8px;top:715.8px" width="10" height="10"><rect x="0.5" y="0.5" width="8.6" height="8.6" rx="1.2" fill="none" stroke="#c8c8c8" stroke-width="1"/><line x1="2.3" y1="4.8" x2="7.3" y2="4.8" stroke="#c8c8c8" stroke-width="1"/><line x1="4.7" y1="2.3" x2="4.7" y2="7.1" stroke="#c8c8c8" stroke-width="1"/></svg>
<svg class="a" style="left:93.8px;top:742.2px" width="10" height="10"><rect x="0.5" y="0.5" width="8.6" height="8.6" rx="1.2" fill="none" stroke="#9a9a9a" stroke-width="1"/><line x1="2.3" y1="4.8" x2="7.3" y2="4.8" stroke="#9a9a9a" stroke-width="1"/><line x1="4.7" y1="2.3" x2="4.7" y2="7.1" stroke="#9a9a9a" stroke-width="1"/></svg>
<svg class="a" style="left:93.8px;top:768.2px" width="10" height="10"><rect x="0.5" y="0.5" width="8.6" height="8.6" rx="1.2" fill="none" stroke="#c8c8c8" stroke-width="1"/><line x1="2.3" y1="4.8" x2="7.3" y2="4.8" stroke="#c8c8c8" stroke-width="1"/><line x1="4.7" y1="2.3" x2="4.7" y2="7.1" stroke="#c8c8c8" stroke-width="1"/></svg>
<div class="a" style="top:687.79px;font-size:13.6px;line-height:13.6px;font-weight:400;color:#111;left:34.20px;transform:scaleX(0.9024);transform-origin:0 0;">2024</div>
<div class="a" style="top:687.79px;font-size:13.6px;line-height:13.6px;font-weight:400;color:#111;left:114.60px;transform:scaleX(0.9236);transform-origin:0 0;">Receivables - South</div>
<div class="a" style="top:687.45px;font-size:14px;line-height:14px;font-weight:400;color:#111;right:1099.20px;transform:scaleX(0.985);transform-origin:100% 0;">215,705.36</div>
<div class="a" style="top:687.45px;font-size:14px;line-height:14px;font-weight:400;color:#111;right:946.20px;transform:scaleX(0.985);transform-origin:100% 0;">10.73%</div>
<div class="a" style="top:687.45px;font-size:14px;line-height:14px;font-weight:400;color:#111;right:836.20px;transform:scaleX(0.985);transform-origin:100% 0;">175,440.00</div>
<div class="a" style="top:687.45px;font-size:14px;line-height:14px;font-weight:400;color:#111;right:758.20px;transform:scaleX(0.985);transform-origin:100% 0;">38%</div>
<div class="a" style="top:687.45px;font-size:14px;line-height:14px;font-weight:400;color:#111;right:658.70px;transform:scaleX(0.985);transform-origin:100% 0;">38%</div>
<div class="a" style="top:687.45px;font-size:14px;line-height:14px;font-weight:400;color:#111;right:557.20px;transform:scaleX(0.985);transform-origin:100% 0;">215,705.36</div>
<div class="a" style="top:687.45px;font-size:14px;line-height:14px;font-weight:400;color:#111;right:443.20px;transform:scaleX(0.985);transform-origin:100% 0;">175,440.00</div>
<div class="a" style="top:687.45px;font-size:14px;line-height:14px;font-weight:400;color:#111;right:360.70px;transform:scaleX(0.985);transform-origin:100% 0;">38%</div>
<div class="a" style="top:687.45px;font-size:14px;line-height:14px;font-weight:400;color:#111;right:256.20px;transform:scaleX(0.985);transform-origin:100% 0;">38%</div>
<div class="a" style="top:687.45px;font-size:14px;line-height:14px;font-weight:400;color:#111;right:146.90px;transform:scaleX(0.985);transform-origin:100% 0;">8,494,205.36</div>
<div class="a" style="top:714.29px;font-size:13.6px;line-height:13.6px;font-weight:400;color:#8c8c8c;left:34.20px;transform:scaleX(0.9024);transform-origin:0 0;">2024</div>
<div class="a" style="top:714.29px;font-size:13.6px;line-height:13.6px;font-weight:400;color:#8c8c8c;left:114.60px;transform:scaleX(0.9236);transform-origin:0 0;">Receivables - North</div>
<div class="a" style="top:713.95px;font-size:14px;line-height:14px;font-weight:400;color:#8c8c8c;right:1099.20px;transform:scaleX(0.985);transform-origin:100% 0;">1,590,821.60</div>
<div class="a" style="top:713.95px;font-size:14px;line-height:14px;font-weight:400;color:#8c8c8c;right:946.20px;transform:scaleX(0.985);transform-origin:100% 0;">79.13%</div>
<div class="a" style="top:713.95px;font-size:14px;line-height:14px;font-weight:400;color:#8c8c8c;right:836.20px;transform:scaleX(0.985);transform-origin:100% 0;">1,054,170.00</div>
<div class="a" style="top:713.95px;font-size:14px;line-height:14px;font-weight:400;color:#8c8c8c;right:758.20px;transform:scaleX(0.985);transform-origin:100% 0;">38%</div>
<div class="a" style="top:713.95px;font-size:14px;line-height:14px;font-weight:400;color:#8c8c8c;right:658.70px;transform:scaleX(0.985);transform-origin:100% 0;">38%</div>
<div class="a" style="top:713.95px;font-size:14px;line-height:14px;font-weight:400;color:#8c8c8c;right:557.20px;transform:scaleX(0.985);transform-origin:100% 0;">1,590,821.60</div>
<div class="a" style="top:713.95px;font-size:14px;line-height:14px;font-weight:400;color:#8c8c8c;right:443.20px;transform:scaleX(0.985);transform-origin:100% 0;">1,054,170.00</div>
<div class="a" style="top:713.95px;font-size:14px;line-height:14px;font-weight:400;color:#8c8c8c;right:360.70px;transform:scaleX(0.985);transform-origin:100% 0;">38%</div>
<div class="a" style="top:713.95px;font-size:14px;line-height:14px;font-weight:400;color:#8c8c8c;right:256.20px;transform:scaleX(0.985);transform-origin:100% 0;">38%</div>
<div class="a" style="top:713.95px;font-size:14px;line-height:14px;font-weight:400;color:#8c8c8c;right:146.90px;transform:scaleX(0.985);transform-origin:100% 0;">4,884,140.91</div>
<div class="a" style="top:740.69px;font-size:13.6px;line-height:13.6px;font-weight:400;color:#111;left:34.20px;transform:scaleX(0.9024);transform-origin:0 0;">2024</div>
<div class="a" style="top:740.69px;font-size:13.6px;line-height:13.6px;font-weight:400;color:#111;left:114.60px;transform:scaleX(0.9236);transform-origin:0 0;">Receivables - East</div>
<div class="a" style="top:740.35px;font-size:14px;line-height:14px;font-weight:400;color:#111;right:1099.20px;transform:scaleX(0.985);transform-origin:100% 0;">203,809.60</div>
<div class="a" style="top:740.35px;font-size:14px;line-height:14px;font-weight:400;color:#111;right:946.20px;transform:scaleX(0.985);transform-origin:100% 0;">10.14%</div>
<div class="a" style="top:740.35px;font-size:14px;line-height:14px;font-weight:400;color:#111;right:836.20px;transform:scaleX(0.985);transform-origin:100% 0;">438,600.00</div>
<div class="a" style="top:740.35px;font-size:14px;line-height:14px;font-weight:400;color:#111;right:758.20px;transform:scaleX(0.985);transform-origin:100% 0;">38%</div>
<div class="a" style="top:740.35px;font-size:14px;line-height:14px;font-weight:400;color:#111;right:658.70px;transform:scaleX(0.985);transform-origin:100% 0;">38%</div>
<div class="a" style="top:740.35px;font-size:14px;line-height:14px;font-weight:400;color:#111;right:557.20px;transform:scaleX(0.985);transform-origin:100% 0;">203,809.60</div>
<div class="a" style="top:740.35px;font-size:14px;line-height:14px;font-weight:400;color:#111;right:443.20px;transform:scaleX(0.985);transform-origin:100% 0;">438,600.00</div>
<div class="a" style="top:740.35px;font-size:14px;line-height:14px;font-weight:400;color:#111;right:360.70px;transform:scaleX(0.985);transform-origin:100% 0;">38%</div>
<div class="a" style="top:740.35px;font-size:14px;line-height:14px;font-weight:400;color:#111;right:256.20px;transform:scaleX(0.985);transform-origin:100% 0;">38%</div>
<div class="a" style="top:740.35px;font-size:14px;line-height:14px;font-weight:400;color:#111;right:146.90px;transform:scaleX(0.985);transform-origin:100% 0;">588,089.60</div>
<div class="a" style="top:766.89px;font-size:13.6px;line-height:13.6px;font-weight:400;color:#8c8c8c;left:34.20px;transform:scaleX(0.9024);transform-origin:0 0;">2024</div>
<div class="a" style="top:766.89px;font-size:13.6px;line-height:13.6px;font-weight:400;color:#8c8c8c;left:114.60px;transform:scaleX(0.9236);transform-origin:0 0;">Receivables - South</div>
<div class="a" style="top:766.55px;font-size:14px;line-height:14px;font-weight:400;color:#8c8c8c;right:146.90px;transform:scaleX(0.985);transform-origin:100% 0;">320,790.00</div>
<div class="a" style="top:783.29px;font-size:13.6px;line-height:13.6px;font-weight:400;color:#8c8c8c;left:114.60px;transform:scaleX(0.9236);transform-origin:0 0;">West</div>
<div class="a" style="left:0;top:790px;width:1392px;height:29px;overflow:hidden">
<div class="a" style="left:34.20px;top:18.69px;font-size:13.6px;line-height:13.6px;font-weight:400;color:#333;transform:scaleX(0.9024);transform-origin:0 0">2024</div>
<div class="a" style="left:114.60px;top:18.35px;font-size:14px;line-height:14px;font-weight:700;color:#111;transform:scaleX(1.0);transform-origin:0 0">Total</div>
<div class="a" style="right:1046.20px;top:18.35px;font-size:14px;line-height:14px;font-weight:700;color:#111;transform:scaleX(1.05);transform-origin:100% 0">2,010,336.56</div>
<div class="a" style="right:893.20px;top:18.35px;font-size:14px;line-height:14px;font-weight:700;color:#111;transform:scaleX(1.05);transform-origin:100% 0">100.00%</div>
<div class="a" style="right:783.20px;top:18.35px;font-size:14px;line-height:14px;font-weight:700;color:#111;transform:scaleX(1.05);transform-origin:100% 0">1,668,210.00</div>
<div class="a" style="right:705.20px;top:18.35px;font-size:14px;line-height:14px;font-weight:700;color:#111;transform:scaleX(1.05);transform-origin:100% 0">38%</div>
<div class="a" style="right:605.70px;top:18.35px;font-size:14px;line-height:14px;font-weight:700;color:#111;transform:scaleX(1.05);transform-origin:100% 0">38%</div>
<div class="a" style="right:504.20px;top:18.35px;font-size:14px;line-height:14px;font-weight:700;color:#111;transform:scaleX(1.05);transform-origin:100% 0">2,010,336.56</div>
<div class="a" style="right:390.20px;top:18.35px;font-size:14px;line-height:14px;font-weight:700;color:#111;transform:scaleX(1.05);transform-origin:100% 0">1,668,210.00</div>
<div class="a" style="right:307.70px;top:18.35px;font-size:14px;line-height:14px;font-weight:700;color:#111;transform:scaleX(1.05);transform-origin:100% 0">38%</div>
<div class="a" style="right:203.20px;top:18.35px;font-size:14px;line-height:14px;font-weight:700;color:#111;transform:scaleX(1.05);transform-origin:100% 0">38%</div>
<div class="a" style="right:93.90px;top:18.35px;font-size:14px;line-height:14px;font-weight:700;color:#111;transform:scaleX(1.05);transform-origin:100% 0">14,287,225.87</div>
</div>
<div class="a" style="left:7.30px;top:820.30px;width:552.40px;height:7.60px;background:#a9a9a9;border-radius:4px"></div>
<div class="a" style="left:1393.50px;top:621.00px;width:6.50px;height:155.40px;background:#a9a9a9;border-radius:3.5px"></div>
<svg class="a" style="left:1420px;top:15px" width="14" height="14"><path d="M7 3 L3.2 7.2 L7 11.4 M10.6 3 L6.8 7.2 L10.6 11.4" fill="none" stroke="#333" stroke-width="1.2"/></svg>
<svg class="a" style="left:1423px;top:49px" width="14" height="15"><g stroke="#333" stroke-width="1.3"><line x1="3" y1="8.5" x2="3" y2="10.5"/><line x1="6.8" y1="5" x2="6.8" y2="11"/><line x1="10.5" y1="2" x2="10.5" y2="12.8"/></g></svg>
<div class="a" style="left:1434.8px;top:73.3px;font-size:19.5px;line-height:19.5px;color:#252525;transform-origin:0 0;transform:rotate(90deg) scaleX(0.9759)">Filters</div>
<div class="a" style="left:0;top:906px;width:1445px;height:57px;background:#f3f3f3"></div>
<div class="a" style="left:0;top:877px;width:1445px;height:29px;background:#f3f3f3;border-top:1px solid #e2e2e2;box-shadow:0 3px 7px rgba(0,0,0,0.16)"></div>
<div class="a" style="left:1192.8px;top:890.3px;width:5.5px;height:2px;background:#555"></div>
<div class="a" style="left:1204px;top:891px;width:119px;height:1.2px;background:#6e6e6e"></div>
<div class="a" style="left:1255.8px;top:885.7px;width:4.4px;height:12.3px;background:#6a6a6a"></div>
<div class="a" style="left:1262.5px;top:888px;width:1px;height:7px;background:#808080"></div>
<svg class="a" style="left:1329px;top:886px" width="11" height="11"><g stroke="#444" stroke-width="1.5"><line x1="0.8" y1="5.5" x2="10" y2="5.5"/><line x1="5.4" y1="1" x2="5.4" y2="10"/></g></svg>
<div class="a" style="top:884.75px;font-size:14px;line-height:14px;font-weight:400;color:#606060;left:1355.00px;transform:scaleX(0.9529);transform-origin:0 0;">92%</div>
<svg class="a" style="left:1405px;top:884px" width="20" height="15"><rect x="1.2" y="1.2" width="16.6" height="11.6" rx="2" fill="none" stroke="#444" stroke-width="1.3"/><path d="M4.2 5.5 V4 H6 M14.8 5.5 V4 H13 M4.2 8.5 V10 H6 M14.8 8.5 V10 H13" fill="none" stroke="#444" stroke-width="1.1"/></svg>
<svg class="a" style="left:37px;top:928px" width="18" height="15"><g stroke="#555" stroke-width="1.3"><line x1="1.7" y1="2.3" x2="16.2" y2="2.3"/><line x1="1.7" y1="7.5" x2="16.2" y2="7.5"/><line x1="1.7" y1="12.7" x2="16.2" y2="12.7"/></g></svg>
<div class="a" style="top:928.93px;font-size:16.5px;line-height:16.5px;font-weight:400;color:#555;left:68.40px;transform:scaleX(1.0063);transform-origin:0 0;">Show Navigation</div>
<svg class="a" style="left:232px;top:927px" width="18" height="18"><g fill="none" stroke="#444" stroke-width="1.4"><path d="M15.8 2.2 L10.2 7.8 M10.2 3.6 V7.8 H14.4"/><path d="M2.2 15.8 L7.8 10.2 M3.6 10.2 H7.8 V14.4"/></g></svg>
<div class="a" style="top:926.81px;font-size:17px;line-height:17px;font-weight:400;color:#333;left:1045.20px;transform:scaleX(0.8733);transform-origin:0 0;">FREE Syspro Sales Sum...</div>
<div class="a" style="left:1239.4px;top:925.2px;width:1.3px;height:19.5px;background:#444"></div>
<div class="a" style="top:926.61px;font-size:17px;line-height:17px;font-weight:400;color:#333;left:1252.00px;transform:scaleX(0.9932);transform-origin:0 0;">Data updated 1/17/25</div>
</body></html>
